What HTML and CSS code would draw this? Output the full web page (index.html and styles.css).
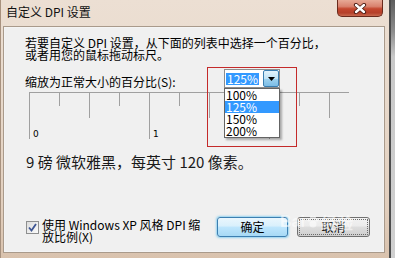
FILE: index.html
```html
<!DOCTYPE html>
<html lang="zh-CN">
<head>
<meta charset="utf-8">
<title>自定义 DPI 设置</title>
<link rel="stylesheet" href="styles.css">
</head>
<body>
<div class="screen">
  <div class="window">
    <div class="titlebar">
      <span class="title">自定义 DPI 设置</span>
      <button class="close" aria-label="关闭">
        <svg width="14" height="11" viewBox="0 0 14 11">
          <path d="M3 2 L11 9 M11 2 L3 9" stroke="#4a1a12" stroke-width="4.2" stroke-linecap="round" fill="none"/>
          <path d="M3 2 L11 9 M11 2 L3 9" stroke="#ffffff" stroke-width="2.4" stroke-linecap="round" fill="none"/>
        </svg>
      </button>
    </div>
    <div class="client">
      <p class="intro">若要自定义 DPI 设置，从下面的列表中选择一个百分比，<br>或者用您的鼠标拖动标尺。</p>
      <div class="scale-row">
        <label class="scale-label">缩放为正常大小的百分比(S):</label>
        <div class="combo">
          <span class="combo-value">125%</span>
          <span class="combo-btn">
            <svg width="7" height="4" viewBox="0 0 7 4"><path d="M0 0 H7 L3.5 4 Z" fill="#000"/></svg>
          </span>
          <ul class="combo-list">
            <li>100%</li>
            <li class="sel">125%</li>
            <li>150%</li>
            <li>200%</li>
          </ul>
          <div class="mark"></div>
        </div>
      </div>
      <div class="ruler">
        <div class="tick long"><span>0</span></div>
        <div class="tick short"></div>
        <div class="tick mid"></div>
        <div class="tick short"></div>
        <div class="tick long"><span>1</span></div>
        <div class="tick short"></div>
        <div class="tick mid"></div>
        <div class="tick short"></div>
        <div class="tick long"></div>
        <div class="tick short"></div>
        <div class="tick mid"></div>
      </div>
      <p class="sample">9 磅 微软雅黑，每英寸 120 像素。</p>
      <div class="footer">
        <label class="xp">
          <span class="box">
            <svg width="11" height="11" viewBox="0 0 11 11"><path d="M2 5.5 L4.5 8.5 L9 2" stroke="#3d5593" stroke-width="1.8" fill="none"/></svg>
          </span>
          <span class="xp-text">使用 Windows XP 风格 DPI 缩<br>放比例(X)</span>
        </label>
        <div class="buttons">
          <button class="btn ok">确定</button>
          <button class="btn cancel">取消</button>
          <span class="watermark">Bai<svg width="14" height="14" viewBox="0 0 14 14"><circle cx="7" cy="9" r="3.5" fill="#fff"/><circle cx="3" cy="5" r="1.6" fill="#fff"/><circle cx="11" cy="5" r="1.6" fill="#fff"/><circle cx="5.5" cy="2.2" r="1.5" fill="#fff"/><circle cx="8.5" cy="2.2" r="1.5" fill="#fff"/></svg>经验</span>
        </div>
      </div>
    </div>
  </div>
  <div class="behind"></div>
</div>
</body>
</html>
```
FILE: styles.css
```css
* { box-sizing: border-box; }
html, body { margin: 0; padding: 0; }
body {
  width: 395px;
  height: 258px;
  overflow: hidden;
  font-family: "Noto Sans CJK SC", "Noto Sans", sans-serif;
  font-size: 12px;
  color: #000;
  background: #cfcfcf;
}
.screen { display: flex; height: 258px; }
.window {
  width: 391px;
  height: 258px;
  display: flex;
  flex-direction: column;
  background: linear-gradient(180deg, #ecdfd3 0%, #e8d9cb 40%, #e2cfbe 80%, #d9c2ad 100%);
  border-left: 1px solid #a8927f;
  border-right: 2px solid #4c4c4c;
}
.titlebar {
  height: 27px;
  flex: none;
  display: flex;
  align-items: flex-start;
  padding-left: 5px;
}
.title {
  margin-top: 5px;
  line-height: 14px;
  font-size: 12px;
  color: #111;
}
.close {
  margin-left: auto;
  margin-right: 6px;
  width: 46px;
  height: 17px;
  padding: 0;
  border: 1px solid #6a2a1c;
  border-top: none;
  border-radius: 0 0 5px 5px;
  background: linear-gradient(180deg, #e7a996 0%, #d9826e 40%, #c4472f 55%, #b5402a 80%, #c86a50 100%);
  display: flex;
  align-items: center;
  justify-content: center;
}
.client {
  flex: 1;
  margin: 0 5px 6px 3px;
  background: #f0f0f0;
  border: 1px solid #f4f4f4;
  box-shadow: 0 0 0 1px #a99a8b;
  display: flex;
  flex-direction: column;
  padding: 9px 13px 8px 20px;
}
.intro { margin: 0; line-height: 12px; }
.scale-row {
  display: flex;
  align-items: flex-end;
  margin-top: 8px;
}
.scale-label { width: 199px; line-height: 12px; }
.combo {
  position: relative;
  width: 56px;
  height: 19px;
  display: flex;
  align-items: center;
  border: 1px solid #8d8d8d;
  background: #fff;
}
.combo-value {
  margin-left: 1px;
  padding: 0 1px;
  line-height: 12px;
  background: #3399ff;
  color: #fff;
}
.combo-btn {
  margin-left: auto;
  width: 16px;
  height: 17px;
  border: 1px solid #3c7fb1;
  border-radius: 2px;
  background: linear-gradient(180deg, #e3f3fb 0%, #c2e4f6 50%, #a0d3ef 51%, #7cbde6 100%);
  display: flex;
  align-items: center;
  justify-content: center;
}
.combo-list {
  position: absolute;
  top: 18px;
  left: -1px;
  width: 56px;
  margin: 0;
  padding: 0;
  list-style: none;
  background: #fff;
  border: 1px solid #646464;
  box-shadow: 2px 2px 2px rgba(0, 0, 0, 0.3);
  z-index: 3;
}
.combo-list li {
  height: 12px;
  line-height: 12px;
  padding-left: 1px;
}
.combo-list li.sel { background: #3399ff; color: #fff; }
.mark {
  position: absolute;
  left: -18px;
  top: -3px;
  width: 90px;
  height: 80px;
  border: 1px solid #c42a2a;
  z-index: 4;
  pointer-events: none;
}
.ruler {
  display: flex;
  width: 320px;
  height: 47px;
  margin: 4px 0 0 4px;
  border-top: 1px solid #a0a0a0;
}
.tick {
  flex: 0 0 30px;
  border-left: 1px solid #a0a0a0;
}
.tick.short { height: 13px; }
.tick.mid { height: 25px; }
.tick.long { height: 46px; display: flex; align-items: flex-end; }
.tick span {
  font-family: "DejaVu Sans", sans-serif;
  font-size: 9px;
  line-height: 10px;
  padding-left: 3px;
}
.sample {
  margin: 14px 0 0 1px;
  font-size: 15px;
  line-height: 18px;
  color: #1a1a1a;
}
.footer {
  margin-top: auto;
  display: flex;
  align-items: flex-start;
}
.xp { display: flex; align-items: flex-start; margin-left: 1px; }
.box {
  width: 13px;
  height: 13px;
  margin-top: 4px;
  border: 1px solid #8e8f8f;
  background: linear-gradient(135deg, #dcdcdc 0%, #fbfbfb 100%);
  display: flex;
  align-items: center;
  justify-content: center;
}
.xp-text { margin: 2px 0 0 3px; line-height: 12px; }
.buttons {
  margin-left: auto;
  display: flex;
  gap: 9px;
  position: relative;
}
.btn {
  height: 20px;
  padding: 0;
  font-family: "Noto Sans CJK SC", sans-serif;
  font-size: 12px;
  line-height: 18px;
  color: #000;
  border-radius: 3px;
}
.btn.ok {
  width: 71px;
  border: 1px solid #3c7fb1;
  background: linear-gradient(180deg, #eaf6fd 0%, #d9f0fc 45%, #bee6fd 50%, #a7d9f5 100%);
  box-shadow: 0 0 2px 1px rgba(108, 198, 240, 0.7);
}
.btn.cancel {
  width: 73px;
  border: 1px solid #707070;
  background: linear-gradient(180deg, #f2f2f2 0%, #ebebeb 45%, #dddddd 50%, #cfcfcf 100%);
  outline: 1px dotted #6a6a6a;
  outline-offset: -3px;
}
.watermark {
  position: absolute;
  left: 63px;
  top: -7px;
  display: flex;
  align-items: center;
  font-family: "Liberation Sans", sans-serif;
  font-size: 16px;
  font-weight: bold;
  color: #fff;
  opacity: 0.55;
  pointer-events: none;
}
.watermark svg { margin: 0 1px; }
.behind {
  width: 4px;
  height: 258px;
  background: linear-gradient(180deg, #5d5d5d 0%, #8b8b8b 12%, #c9c9c9 22%, #d0d0d0 100%);
}
```
